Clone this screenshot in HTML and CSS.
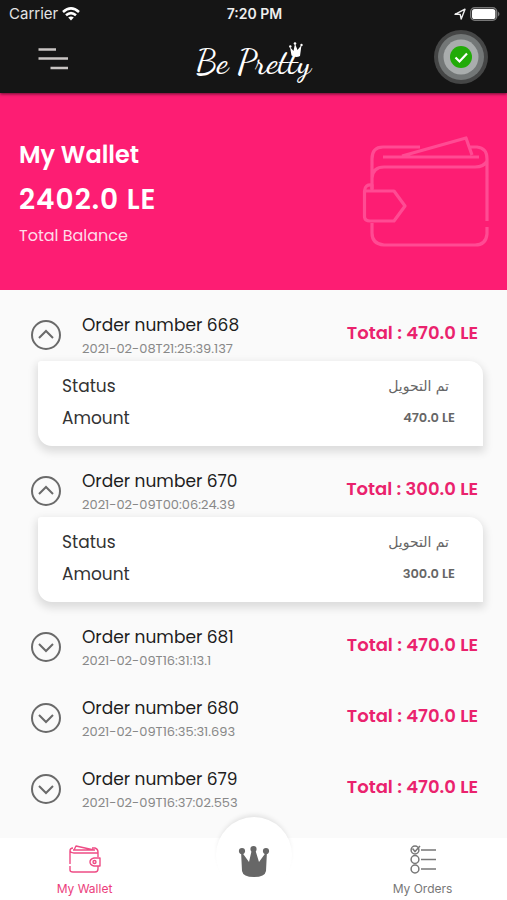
FILE: index.html
```html
<!DOCTYPE html>
<html lang="en">
<head>
<meta charset="utf-8">
<meta name="viewport" content="width=device-width, initial-scale=1">
<title>My Wallet</title>
<link rel="stylesheet" href="styles.css">
</head>
<body>
<svg class="sprite" aria-hidden="true">
  <symbol id="up" viewBox="0 0 32 32"><circle cx="16" cy="16" r="14"/><path d="M9 19l7-7 7 7"/></symbol>
  <symbol id="down" viewBox="0 0 32 32"><circle cx="16" cy="16" r="14"/><path d="M9 13l7 7 7-7"/></symbol>
</svg>
<header class="top">
  <div class="status">
    <span class="carrier">Carrier
      <svg width="18" height="14" viewBox="0 0 18 14" aria-hidden="true"><g fill="none" stroke="#fff" stroke-width="2.6"><path d="M1 4.9Q9 -2 17 4.9"/><path d="M4 8.3Q9 4 14 8.3"/></g><path d="M9 13.6L6.2 10.6Q9 8.4 11.8 10.6Z" fill="#fff"/></svg>
    </span>
    <span class="time">7:20 PM</span>
    <span class="power">
      <svg width="12" height="12" viewBox="0 0 12 12" aria-hidden="true"><path d="M1 6.3L11 1.2 7.2 11 6.2 6.4Z" fill="none" stroke="#eee" stroke-width="1.4" stroke-linejoin="round"/></svg>
      <svg width="30" height="14" viewBox="0 0 30 14" aria-hidden="true"><rect x=".7" y=".7" width="26" height="12.6" rx="4" fill="none" stroke="#777" stroke-width="1.4"/><rect x="2" y="2" width="23.4" height="10" rx="2.6" fill="#fff"/><path d="M28 4.6Q31 7 28 9.4Z" fill="#777"/></svg>
    </span>
  </div>
  <div class="bar">
    <button class="menu" type="button" aria-label="Menu"><svg width="30" height="22" viewBox="0 0 30 22"><path d="M.5 1.5h17.500M.5 10.500h29.500M12.500 20h17.500" stroke="#c9c5c3" stroke-width="2.400"/></svg></button>
    <div class="brand">Be Pretty
      <svg class="tiara" width="14" height="16" viewBox="0 0 14 16" aria-hidden="true"><path d="M2.500 13.500L1 5l3.500 4L6 1.500 8.500 8 12.500 3 11 14Q7 16 2.500 13.500Z" fill="#fff"/><circle cx="1.300" cy="4.500" r="1.200" fill="#fff"/><circle cx="6" cy="1.500" r="1.300" fill="#fff"/><circle cx="12.500" cy="3" r="1.200" fill="#fff"/></svg>
    </div>
    <button class="check" type="button" aria-label="Connected"><svg width="56" height="56" viewBox="0 0 56 56"><circle cx="28" cy="28" r="27" fill="#454646"/><circle cx="28" cy="28" r="23" fill="#737777"/><circle cx="28" cy="28" r="17.500" fill="#a9adad"/><circle cx="28" cy="28" r="11" fill="#22ab08"/><path d="M22.500 28.500l4 4 7.500-8" fill="none" stroke="#fff" stroke-width="2.200"/></svg></button>
  </div>
</header>
<main>
  <section class="hero">
    <div>
      <h1>My Wallet</h1>
      <p class="balance">2402.0 LE</p>
      <p class="caption">Total Balance</p>
    </div>
    <svg width="128" height="114" viewBox="0 0 128 114" fill="none" stroke="#ff4b93" stroke-width="3.200" stroke-linejoin="round" aria-hidden="true"><path d="M10 27V23Q10 11 21 11H58M108 11H115Q125 12 125 23V85M125 91V98Q124 109 113 109H22Q10 108 10 97V87M10 53V23M10 42Q11 31 22 31H113Q122 31 125 25M21 21H117M40 20L104 2 110 19"/><path d="M10 55V49Q3 48 2.500 55V81Q3 85 8 85H32L43 70 32 55H3"/></svg>
  </section>
  <section class="orders" aria-label="Orders">
    <article>
      <div class="order"><button type="button" aria-expanded="true" aria-label="Toggle order 668"><svg width="32" height="32"><use href="#up"/></svg></button>
        <div class="info"><h2>Order number 668</h2><p>2021-02-08T21:25:39.137</p></div><strong>Total : 470.0 LE</strong></div>
      <dl><div><dt>Status</dt><dd class="ar" lang="ar" dir="rtl">تم التحويل</dd></div><div><dt>Amount</dt><dd>470.0 LE</dd></div></dl>
    </article>
    <article>
      <div class="order"><button type="button" aria-expanded="true" aria-label="Toggle order 670"><svg width="32" height="32"><use href="#up"/></svg></button>
        <div class="info"><h2>Order number 670</h2><p>2021-02-09T00:06:24.39</p></div><strong>Total : 300.0 LE</strong></div>
      <dl><div><dt>Status</dt><dd class="ar" lang="ar" dir="rtl">تم التحويل</dd></div><div><dt>Amount</dt><dd>300.0 LE</dd></div></dl>
    </article>
    <article>
      <div class="order"><button type="button" aria-expanded="false" aria-label="Toggle order 681"><svg width="32" height="32"><use href="#down"/></svg></button>
        <div class="info"><h2>Order number 681</h2><p>2021-02-09T16:31:13.1</p></div><strong>Total : 470.0 LE</strong></div>
    </article>
    <article>
      <div class="order"><button type="button" aria-expanded="false" aria-label="Toggle order 680"><svg width="32" height="32"><use href="#down"/></svg></button>
        <div class="info"><h2>Order number 680</h2><p>2021-02-09T16:35:31.693</p></div><strong>Total : 470.0 LE</strong></div>
    </article>
    <article>
      <div class="order"><button type="button" aria-expanded="false" aria-label="Toggle order 679"><svg width="32" height="32"><use href="#down"/></svg></button>
        <div class="info"><h2>Order number 679</h2><p>2021-02-09T16:37:02.553</p></div><strong>Total : 470.0 LE</strong></div>
    </article>
  </section>
</main>
<nav class="tabs" aria-label="Main">
  <a class="active" href="#wallet" aria-current="page">
    <svg width="34" height="30" viewBox="0 0 34 30" fill="none" stroke="#ee4c85" stroke-width="1.400" stroke-linejoin="round" aria-hidden="true"><path d="M30 13V8Q30 5 27 4H24M5 4Q2 4 2 7V20M2 22V26Q2 28 5 28H27Q30 28 30 25V22M2 7Q3 9 6 9H30M5 6H27M6 6L8 2 26 6"/><path d="M32 14H26Q22 15 22 18T26 22H32Z"/><circle cx="26.500" cy="18" r="1.500"/></svg>
    <span>My Wallet</span>
  </a>
  <a class="home" href="#home" aria-label="Home">
    <svg width="32" height="34" viewBox="0 0 32 34" fill="#676767" aria-hidden="true"><circle cx="4" cy="6" r="3.100"/><circle cx="15.500" cy="4" r="3.100"/><circle cx="28" cy="6" r="3.100"/><path d="M3 6L11 17 14 4H17L21 17 29 6 28 26Q27 32 16 32T4 26Z"/></svg>
  </a>
  <a href="#orders">
    <svg width="28" height="30" viewBox="0 0 28 30" fill="none" stroke="#777" stroke-width="1.500" aria-hidden="true"><circle cx="6" cy="6" r="3.900"/><circle cx="6" cy="15.500" r="3.900"/><circle cx="6" cy="25" r="3.900"/><path d="M3.500 4.500L6 7.500 11 2M12 6H27M12 15.500H27M12 25H27"/></svg>
    <span>My Orders</span>
  </a>
</nav>
</body>
</html>
```
FILE: styles.css
```css
* { box-sizing: border-box; }
body { margin: 0; min-height: 100vh; display: flex; flex-direction: column; background: #fafafa; color: #1d1d1d; font-family: Poppins, Inter, sans-serif; }
h1, h2, p, dl, dd { margin: 0; }
button { border: 0; padding: 0; background: none; display: flex; cursor: pointer; }
svg { flex: none; display: block; }
.sprite { position: absolute; width: 0; height: 0; }

.top { background: #151515; color: #fff; position: relative; box-shadow: 0 1px 3px rgba(0, 0, 0, .6); }
.status { display: grid; grid-template-columns: 1fr auto 1fr; align-items: center; height: 28px; padding: 0 7px 0 9px; font: 15px/20px Inter, sans-serif; }
.carrier, .power { display: flex; align-items: center; gap: 4px; color: #e4e4e4; }
.power { justify-content: flex-end; }
.time { font-size: 14px; font-weight: 600; color: #eee; }
.bar { display: grid; grid-template-columns: 1fr auto 1fr; align-items: center; height: 65px; padding: 0 18px 8px 38px; }
.menu { padding-top: 4px; }
.brand { position: relative; left: -10px; padding-top: 12px; font-family: "Dancing Script", "Liberation Serif", serif; font-size: 34px; font-weight: 500; line-height: 44px; }
.tiara { position: absolute; right: 8px; top: 13px; }
.check { justify-self: end; }

.hero { display: flex; justify-content: space-between; align-items: flex-start; height: 197px; padding: 43px 17px 0 19px; background: #fd1d73; color: #fff; }
.hero h1 { font-size: 24px; line-height: 38px; font-weight: 600; }
.balance { font-size: 28px; line-height: 52px; font-weight: 600; letter-spacing: 1px; }
.caption { font-size: 16px; line-height: 20px; color: #ffdce9; }

.orders { padding: 10px 24px 0 30px; }
article { margin-bottom: 10px; }
.order { display: flex; align-items: center; height: 61px; padding-top: 9px; }
.info { flex: 1; margin-left: 20px; padding-top: 4px; }
.order use { fill: none; stroke: #6a6a6a; stroke-width: 2px; }
.info h2 { font-size: 17px; line-height: 24px; font-weight: 400; }
.info p { font-size: 13px; line-height: 24px; color: #888; }
.order strong { padding: 0 5px 5px 0; font-size: 18px; line-height: 24px; font-weight: 600; color: #ea226d; }
dl { height: 85px; margin-left: 8px; padding: 9px 28px 0 24px; background: #fff; border-radius: 3px 14px 0 14px; box-shadow: 0 4px 9px 2px rgba(0, 0, 0, .12); }
dl div { display: flex; justify-content: space-between; align-items: center; height: 32px; }
dt { font-size: 17px; color: #333; }
dd { font-size: 13px; font-weight: 600; color: #666; }
.ar { font-family: "DejaVu Sans", sans-serif; font-size: 14px; font-weight: 400; padding-right: 6px; }

.tabs { display: grid; grid-template-columns: repeat(3, 1fr); height: 62px; margin-top: auto; background: #fff; }
.tabs a { display: flex; flex-direction: column; align-items: center; padding-top: 6px; color: #777; font: 12px/18px Inter, sans-serif; text-decoration: none; }
.tabs span { margin-top: 6px; }
.tabs .active { color: #ec3d7c; }
.tabs .home { justify-self: center; width: 76px; height: 76px; margin-top: -21px; padding-top: 28px; border-radius: 50%; background: #fff; box-shadow: 0 -4px 5px -2px rgba(0, 0, 0, .1); }
```
